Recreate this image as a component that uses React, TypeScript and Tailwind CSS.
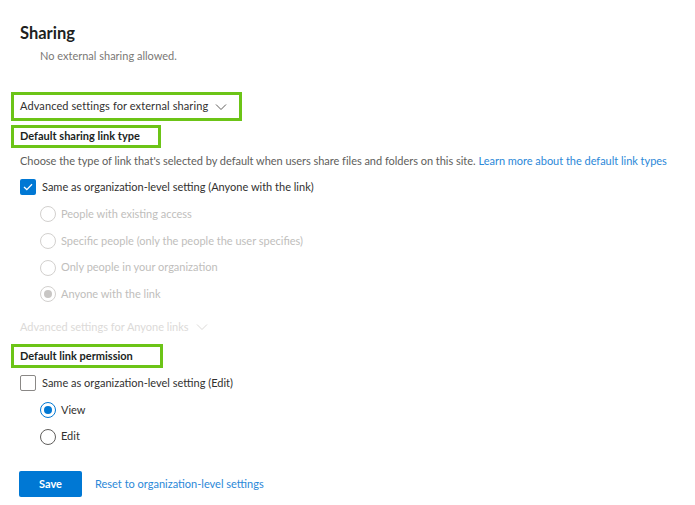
import React from "react";

const Chevron = ({ className }: { className?: string }) => (
  <svg width="12" height="8" viewBox="0 0 12 8" className={className} fill="none">
    <path d="M1 1.5 L6 6.5 L11 1.5" stroke="currentColor" strokeWidth="1" />
  </svg>
);

const Radio = ({
  state,
}: {
  state: "off" | "disabled" | "disabledOn" | "on";
}) => {
  if (state === "on")
    return (
      <span className="w-[16px] h-[16px] rounded-full border border-[#0078d4] flex items-center justify-center bg-white">
        <span className="w-[8px] h-[8px] rounded-full bg-[#0078d4]" />
      </span>
    );
  if (state === "disabledOn")
    return (
      <span className="w-[16px] h-[16px] rounded-full border border-[#d2d0ce] flex items-center justify-center bg-white">
        <span className="w-[8px] h-[8px] rounded-full bg-[#c8c6c4]" />
      </span>
    );
  if (state === "disabled")
    return <span className="w-[16px] h-[16px] rounded-full border border-[#d2d0ce] bg-white" />;
  return <span className="w-[16px] h-[16px] rounded-full border border-[#605e5c] bg-white" />;
};

export default function App() {
  return (
    <div
      className="w-[695px] h-[505px] bg-white text-[#323130] overflow-hidden"
      style={{ fontFamily: 'Lato, "Noto Sans", sans-serif' }}
    >
      <div className="pl-[20px] pt-[22px]">
        <div className="h-[22px] flex items-center text-[16.5px] font-bold text-[#201f1e]">
          Sharing
        </div>
        <div className="h-[22px] mt-[1px] pl-[20px] flex items-center text-[11px] text-[#7a7876]">
          No external sharing allowed.
        </div>

        <div className="mt-[25px] -ml-[9px] w-[231px] h-[29px] border-[3px] border-[#6cc417] flex items-center pl-[6px] text-[11px] text-[#323130] whitespace-nowrap">
          <span className="tracking-[0.1px]">Advanced settings for external sharing</span>
          <Chevron className="ml-[7px] text-[#605e5c]" />
        </div>

        <div className="mt-[4px] -ml-[9px] w-[150px] h-[23px] border-[3px] border-[#6cc417] flex items-center pl-[6px] text-[11px] font-bold text-[#201f1e] whitespace-nowrap">
          Default sharing link type
        </div>

        <div className="mt-[4px] h-[18px] flex items-center text-[11px] text-[#605e5c] whitespace-nowrap tracking-[-0.03px]">
          Choose the type of link that's selected by default when users share files and folders on this site.
          <span className="ml-[3px] text-[#2b88d8]">Learn more about the default link types</span>
        </div>

        <div className="mt-[8px] h-[18px] flex items-center gap-[6px] text-[11px] text-[#323130]">
          <span className="w-[16px] h-[16px] rounded-[2px] bg-[#0078d4] flex items-center justify-center">
            <svg width="10" height="8" viewBox="0 0 10 8" fill="none">
              <path d="M1 4 L3.8 6.6 L9 1.2" stroke="white" strokeWidth="1.3" />
            </svg>
          </span>
          <span>Same as organization-level setting (Anyone with the link)</span>
        </div>

        <div className="pl-[20px] mt-[5px] flex flex-col text-[11px] text-[#c0bebc]">
          {[
            ["People with existing access", "disabled"],
            ["Specific people (only the people the user specifies)", "disabled"],
            ["Only people in your organization", "disabled"],
            ["Anyone with the link", "disabledOn"],
          ].map(([label, st]) => (
            <div key={label} className="h-[26.7px] flex items-center gap-[5px]">
              <Radio state={st as "disabled" | "disabledOn"} />
              <span>{label}</span>
            </div>
          ))}
        </div>

        <div className="mt-[9px] h-[20px] flex items-center text-[11px] text-[#dcdad8]">
          <span>Advanced settings for Anyone links</span>
          <Chevron className="ml-[7px] text-[#dcdad8]" />
        </div>

        <div className="mt-[7px] -ml-[9px] w-[152px] h-[24px] border-[3px] border-[#6cc417] flex items-center pl-[6px] text-[11px] font-bold text-[#201f1e] whitespace-nowrap">
          Default link permission
        </div>

        <div className="mt-[6px] h-[18px] flex items-center gap-[6px] text-[11px] text-[#323130]">
          <span className="w-[16px] h-[16px] rounded-[2px] border border-[#8a8886] bg-white" />
          <span>Same as organization-level setting (Edit)</span>
        </div>

        <div className="pl-[20px] mt-[5px] flex flex-col text-[11px] text-[#323130]">
          <div className="h-[26.5px] flex items-center gap-[5px]">
            <Radio state="on" />
            <span>View</span>
          </div>
          <div className="h-[26.5px] flex items-center gap-[5px]">
            <Radio state="off" />
            <span>Edit</span>
          </div>
        </div>

        <div className="mt-[21px] flex items-center gap-[13px]">
          <button className="w-[63px] h-[26px] -ml-[1px] rounded-[2px] bg-[#0078d4] text-white text-[11px] font-bold">
            Save
          </button>
          <span className="text-[11px] text-[#2b88d8]">Reset to organization-level settings</span>
        </div>
      </div>
    </div>
  );
}
